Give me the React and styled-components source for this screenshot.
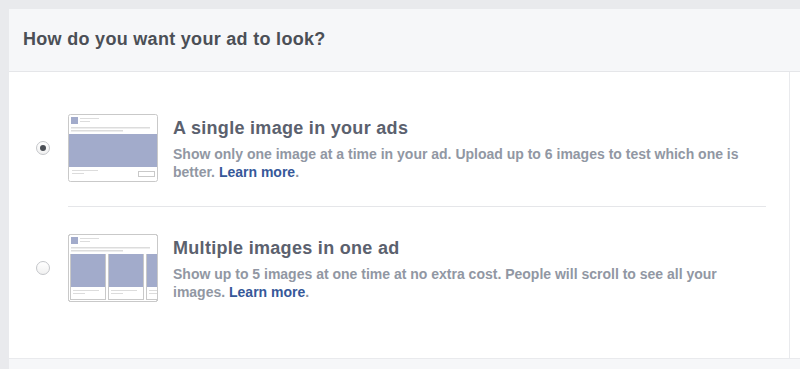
import React from "react";
import styled, { createGlobalStyle } from "styled-components";

const GlobalStyle = createGlobalStyle`
  html, body {
    margin: 0;
    background: #e9eaed;
    font-family: "Liberation Sans", Arial, Helvetica, sans-serif;
  }
`;

const Page = styled.div`
  padding: 9px 0 0 9px;
  height: 369px;
  box-sizing: border-box;
  overflow: hidden;
`;

const Card = styled.section`
  background: #fff;
`;

const Header = styled.header`
  height: 62px;
  display: flex;
  align-items: center;
  padding: 0 14px;
  background: #f6f7f9;
  border-bottom: 1px solid #e5e6e9;
`;

const Heading = styled.h2`
  margin: 0 0 1px;
  font-size: 18px;
  letter-spacing: 0.3px;
  font-weight: 700;
  color: #4b4f56;
`;

const Body = styled.div`
  display: flex;
  height: 286px;
`;

const Options = styled.div`
  flex: 1;
  padding: 42px 23px 0 27px;
  border-right: 1px solid #e9eaed;
`;

const Spacer = styled.div`
  width: 10px;
`;

const Footer = styled.div`
  height: 11px;
  background: #f6f7f9;
  border-top: 1px solid #e9eaed;
`;

const Option = styled.label`
  display: flex;
  align-items: center;
  cursor: pointer;
`;

const Radio = styled.span`
  width: 14px;
  height: 14px;
  box-sizing: border-box;
  border-radius: 50%;
  border: 1px solid #c4c6ca;
  background: linear-gradient(#ffffff, #f1f1f1);
  display: flex;
  align-items: center;
  justify-content: center;
  flex-shrink: 0;
  margin-right: 18px;

  &::after {
    content: "";
    width: 6px;
    height: 6px;
    border-radius: 50%;
    background: ${(p) => (p.$checked ? "#4b4f56" : "transparent")};
  }
`;

const Thumb = styled.svg`
  flex-shrink: 0;
  display: block;
  margin-right: 15px;
`;

const Text = styled.div`
  align-self: flex-start;
  padding-top: 4px;
  max-width: 595px;
`;

const Title = styled.div`
  font-size: 18px;
  letter-spacing: 0.3px;
  line-height: 20px;
  font-weight: 700;
  color: #5b616e;
  margin-bottom: 7px;
`;

const Desc = styled.div`
  font-size: 14px;
  line-height: 18px;
  font-weight: 700;
  color: #9197a3;
`;

const Link = styled.a`
  color: #365899;
  text-decoration: none;
`;

const Divider = styled.hr`
  margin: 24px 0 27px 32px;
  border: 0;
  border-top: 1px solid #e5e6e9;
`;

const IMG = "#a2abcb";
const LINE = "#dcdcdc";
const EDGE = "#c9c9c9";

function ThumbTop() {
  return (
    <>
      <rect x="0.5" y="0.5" width="89" height="67" rx="2" fill="#fff" stroke={EDGE} />
      <rect x="3" y="3" width="7" height="7" fill={IMG} />
      <rect x="12" y="4" width="19" height="1" fill={LINE} />
      <rect x="12" y="7" width="10" height="1" fill={LINE} />
      <rect x="3" y="13" width="79" height="1.5" fill={LINE} />
      <rect x="3" y="16" width="52" height="1.5" fill={LINE} />
    </>
  );
}

function SingleThumb() {
  return (
    <Thumb width="90" height="68" viewBox="0 0 90 68">
      <ThumbTop />
      <rect x="1" y="20" width="88" height="33" fill={IMG} />
      <rect x="4" y="56" width="26" height="1" fill={LINE} />
      <rect x="4" y="59" width="12" height="1" fill={LINE} />
      <rect x="70.5" y="57.5" width="16" height="5" fill="none" stroke={EDGE} />
    </Thumb>
  );
}

function MultiThumb() {
  const cards = [2, 40, 78];
  return (
    <Thumb width="90" height="68" viewBox="0 0 90 68">
      <ThumbTop />
      {cards.map((x) => (
        <g key={x}>
          <rect x={x + 0.5} y="20.5" width="35" height="45" fill="#fff" stroke={EDGE} />
          <rect x={x + 1} y="20" width="34" height="33" fill={IMG} />
          <rect x={x + 3} y="56" width="26" height="1" fill={LINE} />
          <rect x={x + 3} y="59" width="12" height="1" fill={LINE} />
        </g>
      ))}
      <rect x="0.5" y="0.5" width="89" height="67" rx="2" fill="none" stroke={EDGE} />
      <rect x="89" y="19" width="1" height="48" fill={EDGE} />
    </Thumb>
  );
}

export default function App() {
  return (
    <Page>
      <GlobalStyle />
      <Card>
        <Header>
          <Heading>How do you want your ad to look?</Heading>
        </Header>
        <Body>
          <Options>
            <Option>
              <Radio $checked />
              <SingleThumb />
              <Text>
                <Title>A single image in your ads</Title>
                <Desc>
                  Show only one image at a time in your ad. Upload up to 6 images to test which one is
                  better. <Link href="#">Learn more</Link>.
                </Desc>
              </Text>
            </Option>
            <Divider />
            <Option>
              <Radio />
              <MultiThumb />
              <Text>
                <Title>Multiple images in one ad</Title>
                <Desc>
                  Show up to 5 images at one time at no extra cost. People will scroll to see all your
                  images. <Link href="#">Learn more</Link>.
                </Desc>
              </Text>
            </Option>
          </Options>
          <Spacer />
        </Body>
        <Footer />
      </Card>
    </Page>
  );
}
